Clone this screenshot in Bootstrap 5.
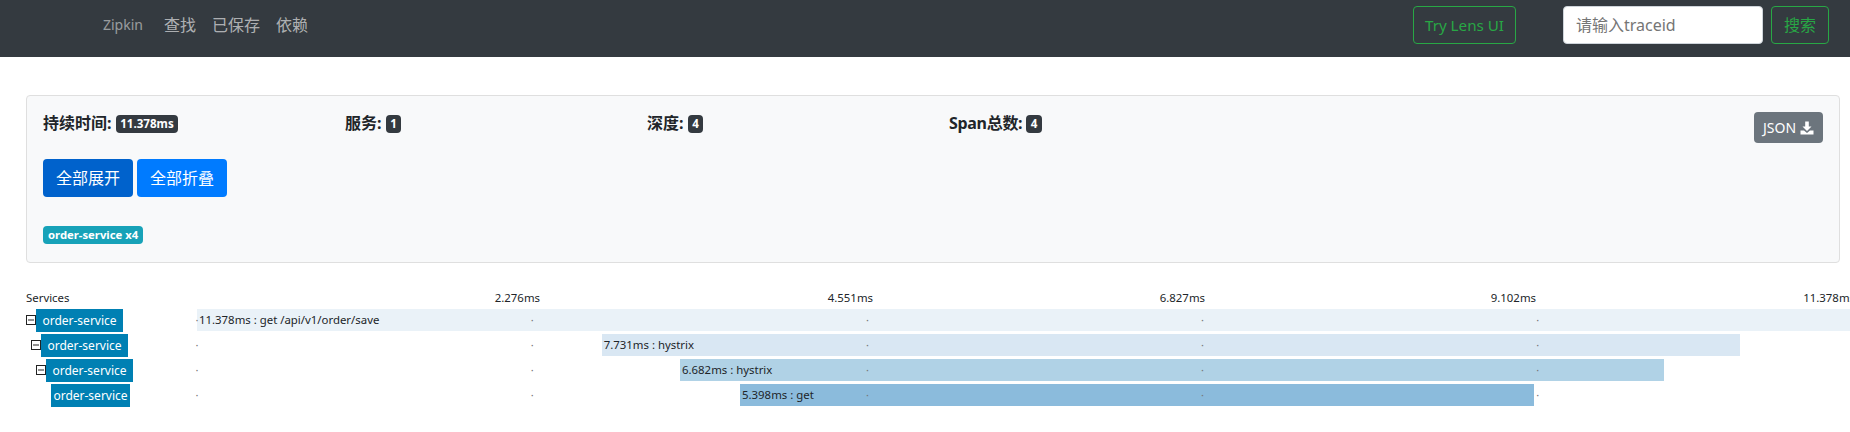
<!DOCTYPE html>
<html lang="zh">
<head>
<meta charset="utf-8">
<title>Zipkin</title>
<link href="https://cdn.jsdelivr.net/npm/bootstrap@5.3.0/dist/css/bootstrap.min.css" rel="stylesheet">
<style>
html,body{overflow:hidden;height:432px;background:#fff}
body{font-family:"Noto Sans","Noto Sans CJK SC",sans-serif;font-size:16px;color:#212529}
.zk-nav{height:57px;background:#343a40;padding:0 21px 8px 103px}
.zk-brand{color:rgba(255,255,255,.5);font-size:14px;margin-right:21px}
.zk-link{color:rgba(255,255,255,.62);font-size:16px;margin-right:16px;text-decoration:none}
.zk-green{color:#28a745;border:1px solid #28a745;background:transparent;height:38px;border-radius:4px;font-size:16px;padding:0 12px;line-height:36px}
.zk-try{width:103px;margin-right:47px;padding:0;text-align:center;font-size:15.2px}
.zk-input{width:200px;height:38px;border-radius:4px;border:1px solid #ced4da;padding:0 12px;font-size:16px;margin-right:8px;background:#fff}
.zk-input::placeholder{color:#757575}
.zk-panel{margin:38px 10px 0 26px;height:168px;background:#f8f9fa;border:1px solid #dfdfdf;border-radius:4px;padding:15px 16px}
.zk-stat{width:302px;font-weight:700;font-size:16px;line-height:24px}
.zk-stat .badge{background:#343a40;font-size:11.6px;padding:3px 4.5px;border-radius:4px;vertical-align:1px}
.zk-tight{letter-spacing:-.3px}
.zk-json{height:31px;width:69px;background:#6c757d;color:#fff;font-size:14px;border-radius:4px;margin-top:1px;border:0;padding:0}
.zk-actions{margin-top:16px}
.zk-btn{height:38px;font-size:16px;color:#fff;border:0;border-radius:4px;background:#007bff;padding:0 13px}
.zk-btn.zk-active{background:#0062cc}
.zk-tags{margin-top:24px}
.zk-tag{background:#17a2b8;color:#fff;font-size:11.3px;font-weight:700;border-radius:4px;padding:0 5px;height:18px;line-height:18px;display:inline-block}
.zk-chart{margin:24px 0 0 26px;font-size:11.4px;color:#212529}
.zk-head{height:22px;line-height:21px}
.zk-name{width:171px;flex:none}
.zk-track{width:1676px;flex:none;position:relative}
.zk-time{position:absolute;top:0;transform:translateX(-100%)}
.zk-row{height:25px}
.zk-svc{display:inline-flex;align-items:center;justify-content:center;height:23px;background:#0080b3;color:#fff;font-size:12px}
.zk-svc-a{width:87px}
.zk-svc-b{width:79px}
.zk-toggle{width:10px;height:10px;flex:none;margin-top:6px}
.zk-ind1{padding-left:5px}
.zk-ind2{padding-left:10px}
.zk-ind3{padding-left:25px}
.zk-bar{position:absolute;top:0;height:22px;line-height:22px;padding-left:2px;white-space:nowrap}
.zk-dot{position:absolute;top:0;height:22px;line-height:22px;color:#777;font-size:11px;margin-left:-1.5px}
</style>
</head>
<body>
<nav class="zk-nav d-flex align-items-center">
  <span class="zk-brand">Zipkin</span>
  <a class="zk-link" href="#">查找</a>
  <a class="zk-link" href="#">已保存</a>
  <a class="zk-link" href="#">依赖</a>
  <button class="zk-green zk-try ms-auto" type="button">Try Lens UI</button>
  <input class="zk-input" type="text" placeholder="请输入traceid">
  <button class="zk-green" type="button">搜索</button>
</nav>

<section class="zk-panel">
  <div class="d-flex align-items-start">
    <div class="zk-stat">持续时间: <span class="badge">11.378ms</span></div>
    <div class="zk-stat">服务: <span class="badge">1</span></div>
    <div class="zk-stat">深度: <span class="badge">4</span></div>
    <div class="zk-stat zk-tight">Span总数: <span class="badge">4</span></div>
    <button class="zk-json ms-auto d-inline-flex align-items-center justify-content-center gap-1" type="button">JSON
      <svg width="14" height="14" viewBox="0 0 14 14" fill="#fff"><path d="M5.200 .5h3.600v5h2.700L7 10 2.500 5.500h2.700z"/><path d="M.5 9.500H4L7 12l3-2.500h3.500v4H.5z"/></svg>
    </button>
  </div>
  <div class="d-flex gap-1 zk-actions">
    <button class="zk-btn zk-active" type="button">全部展开</button>
    <button class="zk-btn" type="button">全部折叠</button>
  </div>
  <div class="zk-tags"><span class="zk-tag">order-service x4</span></div>
</section>

<section class="zk-chart">
  <div class="zk-head d-flex">
    <div class="zk-name">Services</div>
    <div class="zk-track">
      <span class="zk-time" style="left:343px">2.276ms</span>
      <span class="zk-time" style="left:676px">4.551ms</span>
      <span class="zk-time" style="left:1008px">6.827ms</span>
      <span class="zk-time" style="left:1339px">9.102ms</span>
      <span class="zk-time" style="left:1658px">11.378ms</span>
    </div>
  </div>

  <div class="zk-row d-flex">
    <div class="zk-name d-flex">
      <svg class="zk-toggle" viewBox="0 0 10 10"><rect x=".5" y=".5" width="9" height="9" fill="#fff" stroke="#222"/><path d="M2 5h6" stroke="#222"/></svg>
      <span class="zk-svc zk-svc-a">order-service</span>
    </div>
    <div class="zk-track">
      <div class="zk-bar" style="left:0;width:100%;background:#eaf2f8">11.378ms : get /api/v1/order/save</div>
      <span class="zk-dot" style="left:0">·</span><span class="zk-dot" style="left:20%">·</span><span class="zk-dot" style="left:40%">·</span><span class="zk-dot" style="left:60%">·</span><span class="zk-dot" style="left:80%">·</span>
    </div>
  </div>

  <div class="zk-row d-flex">
    <div class="zk-name d-flex zk-ind1">
      <svg class="zk-toggle" viewBox="0 0 10 10"><rect x=".5" y=".5" width="9" height="9" fill="#fff" stroke="#222"/><path d="M2 5h6" stroke="#222"/></svg>
      <span class="zk-svc zk-svc-a">order-service</span>
    </div>
    <div class="zk-track">
      <div class="zk-bar" style="left:24.15%;width:67.9%;background:#d9e7f3">7.731ms : hystrix</div>
      <span class="zk-dot" style="left:0">·</span><span class="zk-dot" style="left:20%">·</span><span class="zk-dot" style="left:40%">·</span><span class="zk-dot" style="left:60%">·</span><span class="zk-dot" style="left:80%">·</span>
    </div>
  </div>

  <div class="zk-row d-flex">
    <div class="zk-name d-flex zk-ind2">
      <svg class="zk-toggle" viewBox="0 0 10 10"><rect x=".5" y=".5" width="9" height="9" fill="#fff" stroke="#222"/><path d="M2 5h6" stroke="#222"/></svg>
      <span class="zk-svc zk-svc-a">order-service</span>
    </div>
    <div class="zk-track">
      <div class="zk-bar" style="left:28.82%;width:58.72%;background:#b0d2e6">6.682ms : hystrix</div>
      <span class="zk-dot" style="left:0">·</span><span class="zk-dot" style="left:20%">·</span><span class="zk-dot" style="left:40%">·</span><span class="zk-dot" style="left:60%">·</span><span class="zk-dot" style="left:80%">·</span>
    </div>
  </div>

  <div class="zk-row d-flex">
    <div class="zk-name d-flex zk-ind3">
      <span class="zk-svc zk-svc-b">order-service</span>
    </div>
    <div class="zk-track">
      <div class="zk-bar" style="left:32.4%;width:47.37%;background:#8bbbdc">5.398ms : get</div>
      <span class="zk-dot" style="left:0">·</span><span class="zk-dot" style="left:20%">·</span><span class="zk-dot" style="left:40%">·</span><span class="zk-dot" style="left:60%">·</span><span class="zk-dot" style="left:80%">·</span>
    </div>
  </div>
</section>
<script src="https://cdn.jsdelivr.net/npm/bootstrap@5.3.0/dist/js/bootstrap.bundle.min.js"></script>
</body>
</html>
